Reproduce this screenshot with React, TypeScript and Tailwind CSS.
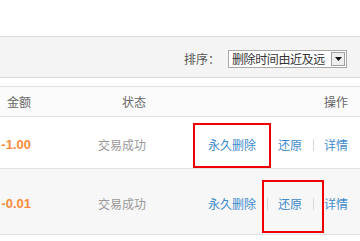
import React from "react";

const font = { fontFamily: '"Noto Sans CJK SC", "Liberation Sans", sans-serif' };

function Sep({ hidden }: { hidden?: boolean }) {
  return <span className={`ml-[11px] mr-[10px] h-[12px] w-[1px] ${hidden ? "bg-transparent" : "bg-[#d8d8d8]"}`} />;
}

function Row({ amount, bg, h, pt, hideFirst }: { amount: string; bg: string; h: string; pt: string; hideFirst?: boolean }) {
  return (
    <div className={`grid grid-cols-[31px_115px_1fr] items-center border-b border-[#e3e3e3] ${bg} ${h} ${pt}`}>
      <div className="text-right text-[13px] font-bold text-[#f98a3c]" style={{ fontFamily: '"Liberation Sans", sans-serif' }}>
        {amount}
      </div>
      <div className="text-right text-[12px] text-[#999]">交易成功</div>
      <div className="flex items-center justify-end pr-[12px] text-[12px] text-[#3d8bcd]">
        <span>永久删除</span>
        <Sep hidden={hideFirst} />
        <span>还原</span>
        <Sep />
        <span>详情</span>
      </div>
    </div>
  );
}

export default function App() {
  return (
    <div className="relative h-[241px] w-[360px] overflow-hidden bg-white" style={font}>
      <div className="h-[36px]" />
      <div className="flex h-[42px] items-center justify-end border-y border-[#dadada] bg-[#f4f4f4] pr-[13px] pt-[3px]">
        <span className="mr-[8px] text-[12px] text-[#555]">排序：</span>
        <div className="flex h-[18px] w-[119px] items-center border border-[#a9a9a9] bg-white">
          <span className="whitespace-nowrap pl-[3px] text-[12px] leading-none tracking-[-0.4px] text-[#333]">删除时间由近及远</span>
          <div className="my-[1px] ml-auto mr-[1px] flex h-[14px] w-[14px] shrink-0 items-center justify-center border border-[#a0a0a0] bg-[#eee]">
            <svg width="7" height="4" viewBox="0 0 7 4"><path d="M0 0h7L3.5 4z" fill="#111" /></svg>
          </div>
        </div>
      </div>
      <div className="h-[8px]" />
      <div className="grid h-[31px] grid-cols-[31px_115px_1fr] items-center border-y border-[#e3e3e3] bg-[#fbfbfb] text-[12px] text-[#666]">
        <div className="text-right">金额</div>
        <div className="text-right">状态</div>
        <div className="pr-[12px] text-right">操作</div>
      </div>
      <Row amount="-1.00" bg="bg-white" h="h-[52px]" pt="pt-[5px]" hideFirst />
      <Row amount="-0.01" bg="bg-[#f7f7f7]" h="h-[66px]" pt="pt-[4px]" />
      <div className="pointer-events-none absolute left-[193px] top-[123px] h-[45px] w-[78px] border-2 border-[#ee0000]" />
      <div className="pointer-events-none absolute left-[262px] top-[180px] h-[53px] w-[62px] border-2 border-[#ee0000]" />
    </div>
  );
}
